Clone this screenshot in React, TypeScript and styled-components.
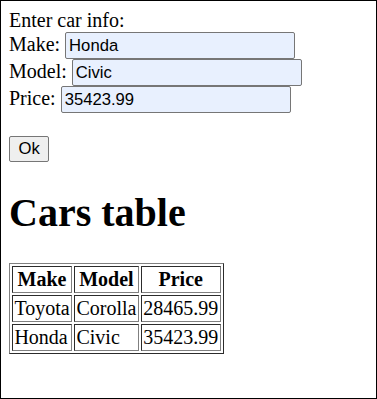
import React, { FC, useState } from "react";
import styled, { createGlobalStyle } from "styled-components";

type Car = {
  make: string;
  model: string;
  price: string;
};

const GlobalStyle = createGlobalStyle`
  html, body {
    margin: 0;
    padding: 0;
    background: #ffffff;
  }
`;

const Frame = styled.div`
  box-sizing: border-box;
  height: 100vh;
  padding: 8px;
  border: 1px solid #000000;
  color: #000000;
  font-family: "Liberation Serif", "Times New Roman", serif;
  font-size: 20px;
`;

const CarForm = styled.form`
  margin: 0;
`;

const Field = styled.input`
  box-sizing: border-box;
  width: 230px;
  height: 27px;
  padding: 1px 3px;
  margin: 0;
  border: 1px solid #767676;
  border-radius: 2px;
  background-color: #e8f0fe;
  color: #000000;
  font-family: "Liberation Sans", Arial, sans-serif;
  font-size: 16.67px;
  vertical-align: baseline;
`;

const OkButton = styled.button`
  box-sizing: border-box;
  height: 26px;
  padding: 1px 8.5px;
  border: 1px solid #767676;
  border-radius: 2px;
  background-color: #efefef;
  color: #000000;
  font-family: "Liberation Sans", Arial, sans-serif;
  font-size: 16.67px;
`;

const Title = styled.h1`
  margin: 0.67em 0;
  font-size: 40px;
  font-weight: bold;
`;

const CarsTable = styled.table`
  border: 1px outset #808080;
  border-spacing: 2px;
  font-size: 20px;
`;

const HeadCell = styled.th`
  border: 1px inset #808080;
  padding: 1px 1.4px;
  font-weight: bold;
`;

const Cell = styled.td`
  border: 1px inset #808080;
  padding: 1px 1.4px;
`;

const App: FC = () => {
  const [make, setMake] = useState("Honda");
  const [model, setModel] = useState("Civic");
  const [price, setPrice] = useState("35423.99");
  const [cars] = useState<Car[]>([
    { make: "Toyota", model: "Corolla", price: "28465.99" },
    { make: "Honda", model: "Civic", price: "35423.99" },
  ]);

  return (
    <Frame>
      <GlobalStyle />
      <CarForm onSubmit={(e) => e.preventDefault()}>
        Enter car info:
        <br />
        Make:{" "}
        <Field value={make} onChange={(e) => setMake(e.target.value)} />
        <br />
        Model:{" "}
        <Field value={model} onChange={(e) => setModel(e.target.value)} />
        <br />
        Price:{" "}
        <Field value={price} onChange={(e) => setPrice(e.target.value)} />
        <br />
        <br />
        <OkButton type="submit">Ok</OkButton>
      </CarForm>
      <Title>Cars table</Title>
      <CarsTable>
        <thead>
          <tr>
            <HeadCell>Make</HeadCell>
            <HeadCell>Model</HeadCell>
            <HeadCell>Price</HeadCell>
          </tr>
        </thead>
        <tbody>
          {cars.map((car) => (
            <tr key={car.make + car.model}>
              <Cell>{car.make}</Cell>
              <Cell>{car.model}</Cell>
              <Cell>{car.price}</Cell>
            </tr>
          ))}
        </tbody>
      </CarsTable>
    </Frame>
  );
};

export default App;
